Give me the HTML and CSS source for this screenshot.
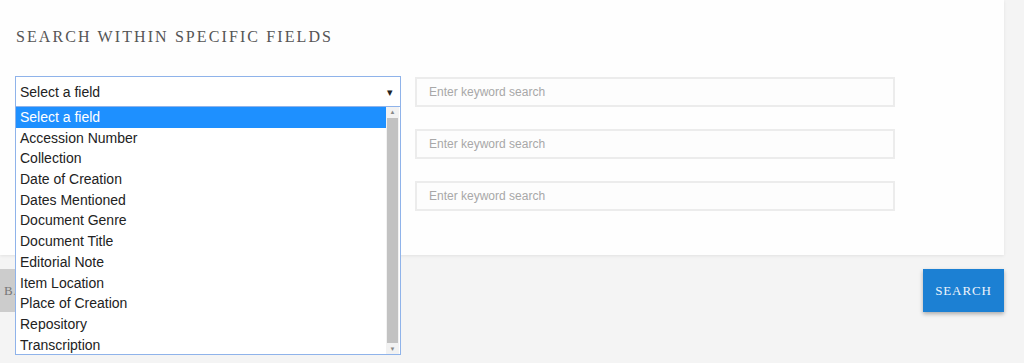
FILE: index.html
```html
<!DOCTYPE html>
<html>
<head>
    <title>Search within specific fields</title>
    <link rel="stylesheet" href="styles.css">
</head>
<body>
    <div class="panel">
        <h2>Search within specific fields</h2>
        <div class="field-grid">
            <!-- linha 1: select aberto -->
            <div class="select-wrap">
                <div class="select">
                    <span>Select a field</span>
                    <span class="caret">&#9662;</span>
                </div>
                <div class="dropdown">
                    <ul class="options">
                        <li class="active">Select a field</li>
                        <li>Accession Number</li>
                        <li>Collection</li>
                        <li>Date of Creation</li>
                        <li>Dates Mentioned</li>
                        <li>Document Genre</li>
                        <li>Document Title</li>
                        <li>Editorial Note</li>
                        <li>Item Location</li>
                        <li>Place of Creation</li>
                        <li>Repository</li>
                        <li>Transcription</li>
                    </ul>
                    <div class="scrollbar">
                        <span class="arrow">&#9650;</span>
                        <div class="thumb"></div>
                        <span class="arrow">&#9660;</span>
                    </div>
                </div>
            </div>
            <input type="text" class="keyword" placeholder="Enter keyword search">

            <div class="select-wrap"></div>
            <input type="text" class="keyword" placeholder="Enter keyword search">

            <div class="select-wrap"></div>
            <input type="text" class="keyword" placeholder="Enter keyword search">
        </div>
    </div>
    <div class="actions">
        <button class="btn-back">Back</button>
        <button class="btn-search">Search</button>
    </div>
</body>
</html>
```

FILE: styles.css
```css
html, body {
    min-height: 363px;
}
body {
    margin: 0;
    background-color: #f4f4f4;
    font-family: "Liberation Sans", Arial, sans-serif;
}
.panel {
    width: 1004px;
    height: 255px;
    box-sizing: border-box;
    background: #fefefe;
    padding: 28px 0 0 15px;
    box-shadow: 0 1px 3px rgba(0,0,0,0.08);
}
.panel h2 {
    margin: 0 0 30px 1px;
    font-family: "Liberation Serif", serif;
    font-weight: normal;
    font-size: 16px;
    line-height: 18px;
    letter-spacing: 2.1px;
    text-transform: uppercase;
    color: #555;
}
.field-grid {
    display: grid;
    grid-template-columns: 386px 480px;
    grid-auto-rows: 31px;
    column-gap: 14px;
    row-gap: 21px;
}
.select-wrap {
    position: relative;
}
.select {
    height: 31px;
    box-sizing: border-box;
    border: 1px solid #8fb3ea;
    background: #fff;
    display: flex;
    align-items: center;
    justify-content: space-between;
    padding: 1px 7px 0 4px;
    font-size: 14px;
    color: #222;
}
.caret {
    font-size: 11px;
}
.dropdown {
    position: absolute;
    top: 31px;
    left: 0;
    width: 386px;
    height: 248px;
    box-sizing: border-box;
    border: 1px solid #8fb3ea;
    border-top: none;
    background: #fff;
    display: flex;
    z-index: 5;
}
.options {
    list-style: none;
    margin: 0;
    padding: 0;
    flex: 1;
}
.options li {
    height: 20.7px;
    line-height: 20.7px;
    padding-left: 4px;
    font-size: 14px;
    color: #222;
}
.options li.active {
    background-color: #1e90ff;
    color: #fff;
}
.scrollbar {
    width: 13px;
    display: flex;
    flex-direction: column;
    align-items: center;
    background: #f2f2f2;
    margin-right: 1px;
}
.scrollbar .arrow {
    font-size: 6px;
    color: #888;
    height: 10px;
    line-height: 10px;
}
.thumb {
    flex: 1;
    width: 11px;
    background: #c2c2c2;
    margin: 1px 0;
}
.keyword {
    height: 30px;
    margin-top: 1px;
    box-sizing: border-box;
    border: 2px solid #ececec;
    background: #fdfdfd;
    padding: 0 12px;
    font-family: "Liberation Sans", Arial, sans-serif;
    font-size: 12px;
    outline: none;
}
.keyword::placeholder {
    color: #a8a8a8;
}
.actions {
    width: 1004px;
    display: flex;
    justify-content: space-between;
    margin-top: 14px;
}
.btn-back,
.btn-search {
    height: 43px;
    border: none;
    font-family: "Liberation Serif", serif;
    font-size: 13px;
    letter-spacing: 0.9px;
    text-transform: uppercase;
    cursor: pointer;
}
.btn-back {
    width: 64px;
    background-color: #cccccc;
    color: #777;
    text-align: left;
    padding-left: 4px;
}
.btn-search {
    width: 81px;
    background-color: #1c80d3;
    color: #eef4fb;
    box-shadow: 0 2px 4px rgba(0,0,0,0.3);
}
```
